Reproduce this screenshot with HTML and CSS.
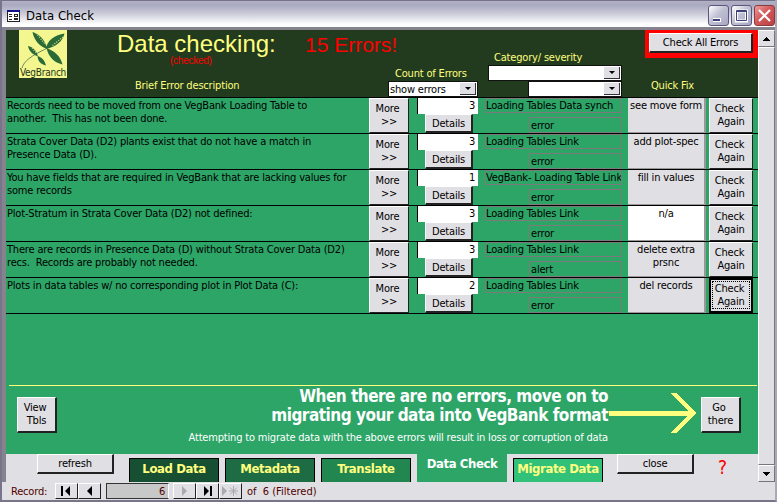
FILE: index.html
```html
<!DOCTYPE html>
<html lang="en">
<head>
<meta charset="utf-8">
<title>Data Check</title>
<link rel="stylesheet" href="styles.css">
</head>
<body>
<div class="window">
  <header class="titlebar">
    <svg class="form-icon" width="13" height="12" viewBox="0 0 13 12" shape-rendering="crispEdges"><path fill="#fff" d="M0 0h13v12H0z"/><path fill="#10108a" d="M0 0h13v2H0z"/><path fill="none" stroke="#222" d="M.5 2v9.500h12V2M2 4.500h3M2 6.500h3M2 9.500h3M7.500 4.500h3v2h-3zM7.500 8.500h3v1h-3z"/></svg>
    <h1>Data Check</h1>
    <div class="caption-buttons">
      <span class="cap"><svg width="19" height="19"><path fill="#fff" d="M4 12h8v4H4z"/><path fill="#404078" d="M4 13h7v2H4z"/></svg></span>
      <span class="cap"><svg width="19" height="19"><path fill="none" stroke="#fff" stroke-width="3" d="M4.500 5h10v10h-10z"/><path fill="none" stroke="#404078" d="M4.500 4.500h10v10h-10zM4 5.500h11"/></svg></span>
      <span class="cap cap-close"><svg width="19" height="19"><path stroke="#fff" stroke-width="2.200" d="M4 4l11 11M15 4L4 15"/></svg></span>
    </div>
  </header>

  <div class="client">
    <main class="form">
      <section class="form-header">
        <div class="logo">
          <svg width="48" height="38" viewBox="0 0 48 38"><path fill="none" stroke="#6f8c60" d="M3 38C5 31 12 26 27.500 18.500"/><path fill="#2a6a36" d="M28 19C20 16 15 10 13.500 2c7 2 13 8 14.500 17zM27 19C28 10 36 5 45.500 3.500 44 11 37 17 27 19zM27.500 18c8 3 14 8 16 16.500-8-2-14-7-16-16.500zM19 26.500C13 24 10 21 9 16c5 1 9 5 10 10.500zM18.500 26c4 1 7 4 8.500 9.500-5-1-8-4-8.500-9.500z"/><path fill="none" stroke="#dfe689" stroke-width="1.300" stroke-dasharray="1 1.500" d="M17 3l9 11M44 7L33 16M11.500 16l6 7"/></svg>
          <span>VegBranch</span>
        </div>
        <div class="heading">
          <div class="heading-line"><span class="heading-title">Data checking:</span><span class="error-total">15 Errors!</span></div>
          <div class="checked">(checked)</div>
          <div class="col-brief">Brief Error description</div>
        </div>
        <div class="col-count"><label>Count of Errors</label><div class="combo"><span>show errors</span><i></i></div></div>
        <div class="col-category"><label>Category/ severity</label><div class="combo"><span></span><i></i></div><div class="combo combo-small"><span></span><i></i></div></div>
        <div class="col-fix"><div class="alert-frame"><button class="check-all">Check All Errors</button></div><label>Quick Fix</label></div>
      </section>

      <section class="rows">
        <div class="row"><p>Records need to be moved from one VegBank Loading Table to<br>another.&nbsp; This has not been done.</p><button class="more">More&nbsp;<br>&gt;&gt;</button><div class="count"><span>3</span><button>Details</button></div><div class="category"><span>Loading Tables Data synch</span><em>error</em></div><div class="fix">see move form</div><button class="again">Check&nbsp;<br>Again</button></div>
        <div class="row"><p>Strata Cover Data (D2) plants exist that do not have a match in<br>Presence Data (D).</p><button class="more">More&nbsp;<br>&gt;&gt;</button><div class="count"><span>3</span><button>Details</button></div><div class="category"><span>Loading Tables Link</span><em>error</em></div><div class="fix">add plot-spec</div><button class="again">Check&nbsp;<br>Again</button></div>
        <div class="row"><p>You have fields that are required in VegBank that are lacking values for<br>some records</p><button class="more">More&nbsp;<br>&gt;&gt;</button><div class="count"><span>1</span><button>Details</button></div><div class="category"><span>VegBank- Loading Table Link</span><em>error</em></div><div class="fix">fill in values</div><button class="again">Check&nbsp;<br>Again</button></div>
        <div class="row"><p>Plot-Stratum in Strata Cover Data (D2) not defined:</p><button class="more">More&nbsp;<br>&gt;&gt;</button><div class="count"><span>3</span><button>Details</button></div><div class="category"><span>Loading Tables Link</span><em>error</em></div><div class="fix fix-none">n/a</div><button class="again">Check&nbsp;<br>Again</button></div>
        <div class="row"><p>There are records in Presence Data (D) without Strata Cover Data (D2)<br>recs.&nbsp; Records are probably not needed.</p><button class="more">More&nbsp;<br>&gt;&gt;</button><div class="count"><span>3</span><button>Details</button></div><div class="category"><span>Loading Tables Link</span><em>alert</em></div><div class="fix">delete extra<br>prsnc</div><button class="again">Check&nbsp;<br>Again</button></div>
        <div class="row"><p>Plots in data tables w/ no corresponding plot in Plot Data (C):</p><button class="more">More&nbsp;<br>&gt;&gt;</button><div class="count"><span>2</span><button>Details</button></div><div class="category"><span>Loading Tables Link</span><em>error</em></div><div class="fix">del records</div><button class="again focused"><u>Check&nbsp;<br>Again</u></button></div>
      </section>

      <section class="next-step">
        <button class="square">View&nbsp;<br>Tbls</button>
        <div class="message">
          <h2>When there are no errors, move on to<br>migrating your data into VegBank format</h2>
          <p>Attempting to migrate data with the above errors will result in loss or corruption of data</p>
        </div>
        <svg class="arrow" width="88" height="40" viewBox="0 0 88 40" shape-rendering="crispEdges"><path fill="none" stroke="#ffff80" stroke-width="5" d="M0 20.500h83"/><path fill="#ffff80" d="M61 0h6l20 20-20 20h-6l20-20z"/></svg>
        <button class="square">Go&nbsp;<br>there</button>
      </section>

      <nav class="tabs">
        <button class="flat refresh">refresh</button>
        <a class="tab tab-load">Load Data</a>
        <a class="tab tab-meta">Metadata</a>
        <a class="tab tab-translate">Translate</a>
        <a class="tab tab-check">Data Check</a>
        <a class="tab tab-migrate">Migrate Data</a>
        <button class="flat close">close</button>
        <span class="help">?</span>
      </nav>
    </main>

    <aside class="scrollbar">
      <span class="sb-button"><svg width="7" height="4" shape-rendering="crispEdges"><path d="M3 0h1v1h1v1h1v1h1v1H0V3h1V2h1V1h1z"/></svg></span>
      <span class="thumb"></span>
      <span class="sb-button"><svg width="7" height="4" shape-rendering="crispEdges"><path d="M0 0h7v1H6v1H5v1H4v1H3V3H2V2H1V1H0z"/></svg></span>
    </aside>
  </div>

  <footer class="record-bar">
    <span class="record-label">Record:</span>
    <button class="nav"><svg width="11" height="10"><path d="M0 0h2v10H0zM9 0v10L4 5z"/></svg></button>
    <button class="nav"><svg width="11" height="10"><path d="M8 0v10L3 5z"/></svg></button>
    <span class="record-field">6</span>
    <button class="nav"><svg width="11" height="10"><path fill="#aaa9ae" d="M3 0v10l5-5z"/></svg></button>
    <button class="nav"><svg width="11" height="10"><path d="M2 0v10l5-5zM8 0h2v10H8z"/></svg></button>
    <button class="nav"><svg width="17" height="10"><path fill="#aaa9ae" d="M0 0v10l5-5z"/><path stroke="#aaa9ae" d="M7 5h9M11.500 0v10M8 1.500l7 7M15 1.500l-7 7"/></svg></button>
    <span class="record-total">of&nbsp; 6 (Filtered)</span>
  </footer>
</div>
</body>
</html>
```

FILE: styles.css
```css
* { box-sizing: border-box; margin: 0; padding: 0; }

body {
  width: 777px;
  height: 502px;
  overflow: hidden;
  background: #e0dfe3;
  color: #000;
  font: 11px/13px "DejaVu Sans Condensed", "DejaVu Sans", Tahoma, sans-serif;
  letter-spacing: -0.18px;
}

svg { display: block; }

button {
  font: inherit;
  letter-spacing: inherit;
  color: #000;
  background: #e0dfe3;
  border: solid;
  border-width: 1px 2px 2px 1px;
  border-color: #fff #222 #222 #fff;
  border-radius: 0;
}

.window {
  height: 502px;
  display: flex;
  flex-direction: column;
  border-left: 2px solid #77748b;
  border-right: 2px solid #aaa9b8;
  border-bottom: 2px solid #77758a;
}

/* Title bar */
.titlebar {
  height: 27px;
  flex: none;
  display: flex;
  align-items: center;
  padding: 3px 0 0 5px;
  border-top: 1px solid #73728a;
  background: linear-gradient(#b2b1c6, #a9a9c0 15%, #c7c7d6 45%, #fff 90%, #fff);
}

.titlebar h1 {
  flex: 1;
  padding-left: 6px;
  font-size: 13px;
  font-weight: normal;
  line-height: 18px;
  letter-spacing: 0.05px;
}

.caption-buttons { display: flex; gap: 2px; }

.cap {
  width: 21px;
  height: 21px;
  border: 1px solid #59587c;
  border-radius: 3px;
  background: linear-gradient(135deg, #fff, #c1c1d4 45%, #a6a6c2);
}

.cap-close {
  border-color: #8a3a40;
  background: linear-gradient(135deg, #eba0a0, #d3595a 45%, #bb4045);
}

/* Form area */
.client {
  height: 455px;
  display: flex;
  border-top: 3px solid #85838e;
  border-left: 4px solid #85838e;
}

.form { width: 752px; height: 452px; background: #2ca567; }

.form-header {
  height: 67px;
  display: flex;
  background: #223a1e;
  color: #ffff80;
}

.logo {
  width: 48px;
  height: 48px;
  margin-left: 13px;
  background: #f4f78f;
  color: #1d351b;
  text-align: center;
}

.logo span { display: block; margin-top: -2px; line-height: 13px; font-size: 10px; letter-spacing: -0.25px; }

.heading { width: 321px; padding-left: 50px; }

.heading-line {
  height: 25px;
  display: flex;
  align-items: baseline;
  font-family: "Liberation Sans", Arial, sans-serif;
  font-size: 24px;
  line-height: 28px;
  letter-spacing: 0;
  white-space: nowrap;
}

.heading-title { flex: none; width: 188px; }
.error-total { color: #f00; font-size: 21px; }

.checked {
  height: 11px;
  padding-left: 53px;
  color: #f00;
  font: 10px/11px "Liberation Sans", Arial, sans-serif;
  letter-spacing: -0.25px;
}

.col-brief { padding: 13px 0 0 18px; }
.col-count { width: 91px; padding-top: 37px; }
.col-count label { padding-left: 7px; display: block; height: 14px; }
.col-category { width: 135px; margin-left: 9px; padding-top: 21px; }
.col-category label { display: block; height: 14px; padding-left: 6px; }

.combo {
  height: 16px;
  width: 90px;
  display: flex;
  align-items: center;
  justify-content: space-between;
  background: #fff;
  color: #000;
  border: 1px solid #111;
  padding: 1px;
}

.col-category .combo { width: 134px; }
.col-category .combo.combo-small { width: 94px; margin-left: 40px; }

.combo i {
  width: 16px;
  height: 12px;
  display: flex;
  align-items: center;
  justify-content: center;
  background: #e0dfe3;
  border-right: 1px solid #333;
  border-bottom: 1px solid #333;
}

.combo i::before {
  content: "";
  border: solid transparent;
  border-width: 3px 3px 0;
  border-top-color: #000;
}

.col-fix { width: 135px; padding-left: 22px; }
.alert-frame { width: 113px; height: 28px; padding: 3px 5px 5px 4px; background: #f00; }
.check-all { display: block; width: 104px; height: 20px; }
.col-fix label { display: block; padding: 21px 0 0 6px; }

/* Error rows */
.rows { border-bottom: 1px solid #000; }

.row {
  height: 36px;
  display: grid;
  grid-template-columns: 363px 40px 61px 137px 78px 45px;
  border-top: 1px solid #000;
}

.row p { padding: 1px 0 0 1px; white-space: nowrap; }
.more, .again {
  height: 35px;
  padding-bottom: 2px;
  border-right-width: 1px;
  border-bottom-width: 1px;
}
.more { text-align: center; }
.count { margin-left: 8px; width: 61px; }
.count span {
  display: block;
  height: 16px;
  padding: 1px 3px 0 0;
  background: #fff;
  border-left: 1px solid #000;
  text-align: right;
}
.count button { display: block; width: 48px; height: 19px; margin-left: 8px; }
.category { margin-left: 15px; width: 137px; }
.category span, .category em {
  display: block;
  border: 1px solid #7b7b7b;
  font-style: normal;
  white-space: nowrap;
  overflow: hidden;
}
.category span { height: 15px; }
.category em { width: 93px; height: 16px; margin: 4px 0 0 44px; padding: 1px 0 0 1px; }
.fix {
  margin-left: 21px;
  width: 78px;
  height: 35px;
  padding-top: 1px;
  background: #e0dfe3;
  border: solid #999;
  border-width: 0 2px 1px 0;
  text-align: center;
  white-space: nowrap;
}
.fix-none { background: #fff; }
.again { margin-left: 24px; width: 44px; }
.focused { padding: 0 1px 1px; border: 2px solid #000; }
.focused u { display: block; text-decoration: none; border: 1px dotted #000; }

/* Next step */
.next-step {
  height: 69px;
  margin: 71px 1px 0 3px;
  padding-left: 8px;
  display: flex;
  border-top: 1px solid #ffff80;
}

.square { width: 40px; height: 36px; margin-top: 11px; padding-bottom: 1px; flex: none; }
.message { width: 551px; color: #fff; text-align: right; white-space: nowrap; }
.message h2 { font-size: 17px; line-height: 19px; letter-spacing: -0.5px; padding-top: 1px; }
.message p { padding-top: 6px; }
.arrow { margin: 7px 4px 0 1px; flex: none; }

/* Tabs */
.tabs { height: 28px; display: flex; align-items: flex-start; background: #e0dfe3; }
.flat { width: 77px; height: 20px; flex: none; }
.refresh { margin: 0 15px 0 31px; }
.tab {
  width: 90px;
  height: 24px;
  margin: 4px 6px 0 0;
  flex: none;
  border: 1px solid #000;
  border-bottom: 0;
  color: #ffff80;
  font-size: 13px;
  font-weight: bold;
  letter-spacing: -0.4px;
  line-height: 20px;
  text-align: center;
  white-space: nowrap;
}
.tab-load { background: #174f32; }
.tab-meta { background: #1d6c43; }
.tab-translate { background: #228651; }
.tab-check { margin-top: 0; height: 28px; border: 0; background: #2ca567; color: #fff; }
.tab-migrate { background: #31c178; }
.close { margin-left: 8px; }
.help { margin-left: 24px; padding-top: 4px; color: #f00; font-size: 19px; line-height: 18px; }

/* Scroll bar */
.scrollbar { width: 17px; height: 452px; display: flex; flex-direction: column; background: #f5f4f6; }
.sb-button, .thumb {
  background: #e0dfe3;
  border: 1px solid #fff;
  border-right-color: #77757f;
  border-bottom-color: #77757f;
}
.sb-button { height: 17px; display: flex; align-items: center; justify-content: center; }
.thumb { flex: 1; }

/* Record navigator */
.record-bar { flex: 1; display: flex; align-items: flex-start; padding: 1px 0 0 9px; color: #500000; }
.record-label { width: 44px; line-height: 17px; }
.nav { width: 23px; height: 16px; display: flex; align-items: center; justify-content: center; border-right-width: 1px; border-bottom-width: 1px; }
.record-field { width: 63px; height: 16px; margin: 0 4px 0 5px; padding-right: 3px; background: #c8c8c8; border: 1px solid #333; border-right-color: #fff; text-align: right; line-height: 15px; }
.record-total { margin-left: 5px; line-height: 17px; letter-spacing: 0; white-space: nowrap; }
```
